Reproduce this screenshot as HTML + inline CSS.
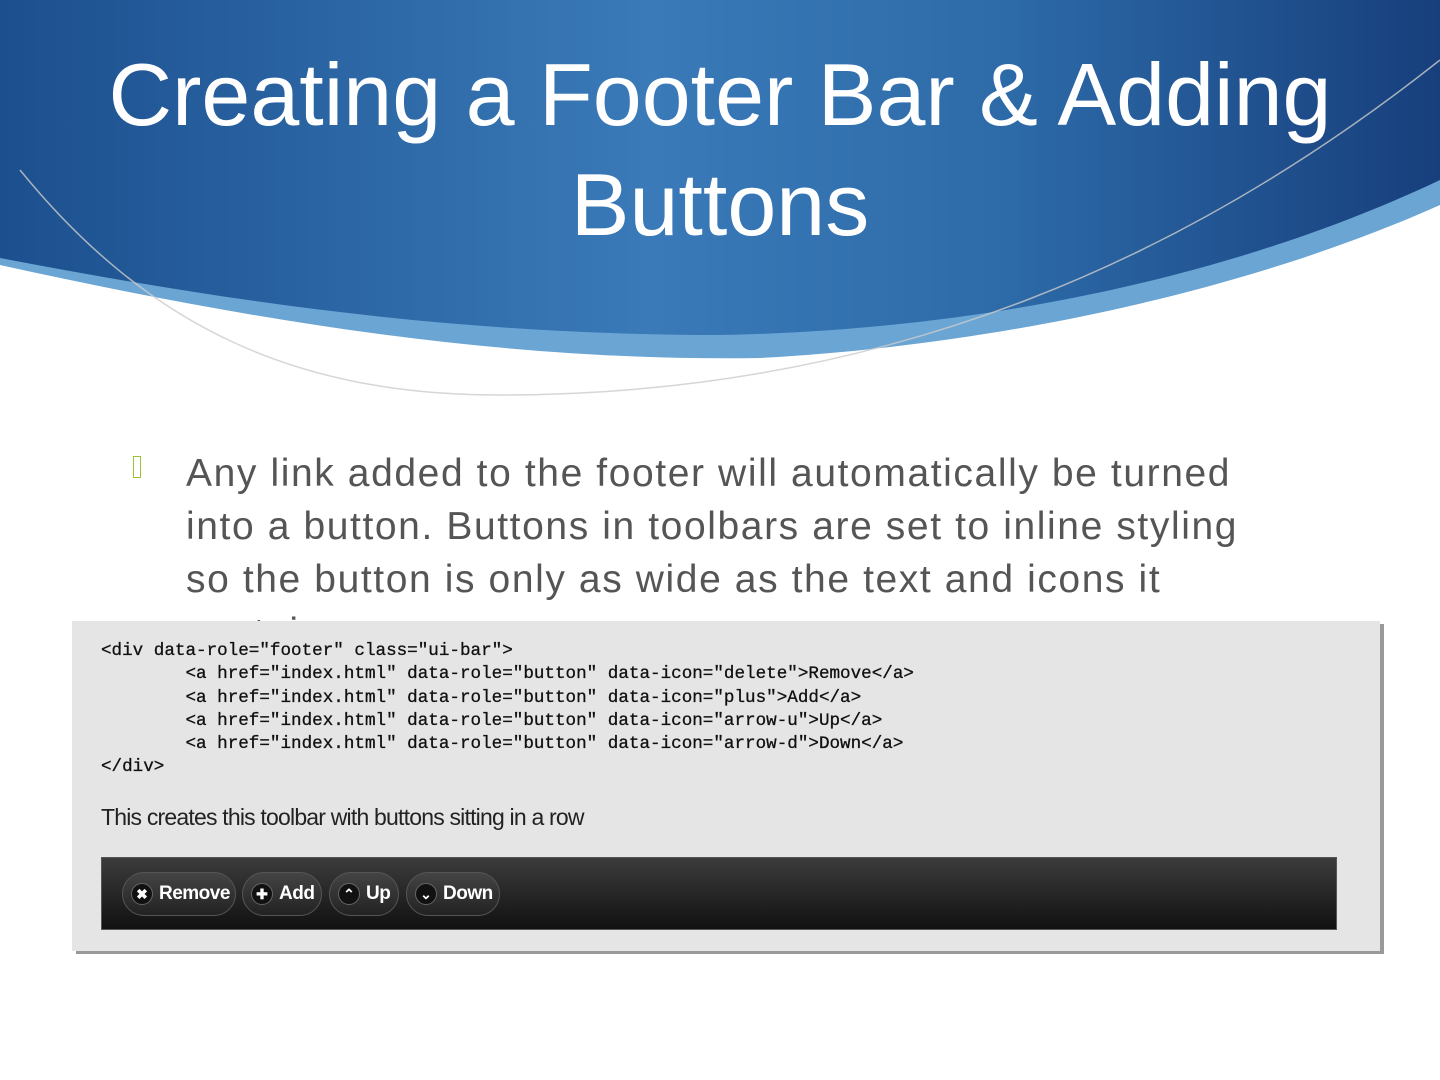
<!DOCTYPE html>
<html><head><meta charset="utf-8"><style>
body{margin:0;width:1440px;height:1080px;overflow:hidden;background:#fff;position:relative;font-family:"Liberation Sans",sans-serif}
.t{position:absolute;left:0;width:1440px;text-align:center;color:#fff;font-size:88px;line-height:110px}
.body{position:absolute;left:186px;top:447px;width:1200px;font-size:39px;line-height:53px;color:#555;letter-spacing:1.6px;white-space:nowrap}
.bul{position:absolute;left:133px;top:456px;width:8px;height:22px;border:1.5px solid #9bc33a;box-sizing:border-box}
.shot{position:absolute;left:72px;top:621px;width:1308px;height:330px;background:#e5e5e5;box-shadow:4px 3px 0 #999}
.code{position:absolute;left:29px;top:19px;font-family:"Liberation Mono",monospace;font-size:17.6px;line-height:23.3px;color:#111;white-space:pre;margin:0;-webkit-text-stroke:0.3px #111}
.cap{position:absolute;left:29px;top:183px;font-size:23px;color:#222;letter-spacing:-0.8px}
.bar{position:absolute;left:29px;top:236px;width:1236px;height:73px;background:linear-gradient(#3c3c3c,#111);border:1px solid #555;box-sizing:border-box}
.btn{position:absolute;top:14px;height:44px;border-radius:22px;background:linear-gradient(#444,#222);border:1px solid #555;box-sizing:border-box;color:#fff;font-weight:bold;font-size:19px;letter-spacing:-0.5px;display:flex;align-items:center}
.ic{display:flex;align-items:center;justify-content:center;width:20px;height:20px;border-radius:50%;background:#111;border:1px solid #666;margin:0 6px 0 8px;color:#fff;font-size:14px;letter-spacing:0}
</style></head><body>
<svg width="1440" height="420" style="position:absolute;left:0;top:0">
<defs><linearGradient id="g" x1="0" x2="1"><stop offset="0" stop-color="#1c4f8e"/><stop offset=".45" stop-color="#3a7ab8"/><stop offset=".7" stop-color="#2d6aa8"/><stop offset="1" stop-color="#173f7c"/></linearGradient></defs>
<path d="M0 0H1440V205C1250 290 1000 345 760 358C500 362 250 320 0 265Z" fill="#6aa5d4"/>
<path d="M0 0H1440V180C1250 270 1000 330 720 335C450 335 220 300 0 258Z" fill="url(#g)"/>
<path d="M1440 60C1200 250 900 395 500 395C300 395 150 330 20 170" fill="none" stroke="#ccc" stroke-width="1.5" opacity=".8"/>
</svg>
<div class="t" style="top:40px">Creating a Footer Bar &amp; Adding</div>
<div class="t" style="top:150px">Buttons</div>
<div class="bul"></div>
<div class="body">Any link added to the footer will automatically be turned<br>into a button. Buttons in toolbars are set to inline styling<br>so the button is only as wide as the text and icons it<br>contains.</div>
<div class="shot">
<pre class="code">&lt;div data-role="footer" class="ui-bar"&gt;
        &lt;a href="index.html" data-role="button" data-icon="delete"&gt;Remove&lt;/a&gt;
        &lt;a href="index.html" data-role="button" data-icon="plus"&gt;Add&lt;/a&gt;
        &lt;a href="index.html" data-role="button" data-icon="arrow-u"&gt;Up&lt;/a&gt;
        &lt;a href="index.html" data-role="button" data-icon="arrow-d"&gt;Down&lt;/a&gt;
&lt;/div&gt;</pre>
<div class="cap">This creates this toolbar with buttons sitting in a row</div>
<div class="bar">
<div class="btn" style="left:20px;width:114px"><span class="ic">✖</span>Remove</div>
<div class="btn" style="left:140px;width:80px"><span class="ic">✚</span>Add</div>
<div class="btn" style="left:227px;width:70px"><span class="ic">⌃</span>Up</div>
<div class="btn" style="left:304px;width:94px"><span class="ic">⌄</span>Down</div>
</div>
</div>
</body></html>
